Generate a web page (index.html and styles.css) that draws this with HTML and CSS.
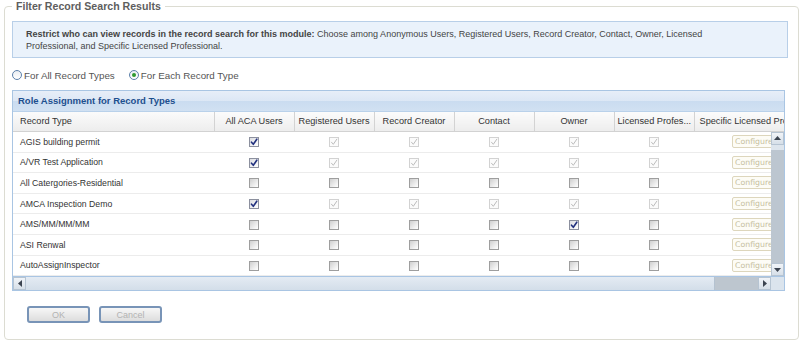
FILE: index.html
```html
<!DOCTYPE html>
<html lang="en">
<head>
	<title>Filter Record Search Results</title>
	<meta charset="utf-8" />
	<link rel="stylesheet" href="styles.css">
</head>
<body>
	<fieldset class="filter">
		<legend>Filter Record Search Results</legend>
		<div class="note">
			<b>Restrict who can view records in the record search for this module:</b> Choose among Anonymous Users, Registered Users, Record Creator, Contact, Owner, Licensed<br>
			Professional, and Specific Licensed Professional.
		</div>
		<div class="scope">
			<label class="opt"><span class="radio"></span>For All Record Types</label>
			<label class="opt"><span class="radio on"></span>For Each Record Type</label>
		</div>
		<div class="grid">
			<div class="grid-title">Role Assignment for Record Types</div>
			<div class="grid-head">
				<table>
					<colgroup><col class="c-name"><col><col><col><col><col><col><col class="c-spec"></colgroup>
					<tr>
						<th class="name">Record Type</th>
						<th>All ACA Users</th>
						<th>Registered Users</th>
						<th>Record Creator</th>
						<th>Contact</th>
						<th>Owner</th>
						<th>Licensed Profes...</th>
						<th class="spec">Specific Licensed Professional</th>
					</tr>
				</table>
			</div>
			<div class="grid-body">
				<div class="grid-view">
					<table id="rows">
						<colgroup><col class="c-name"><col><col><col><col><col><col><col class="c-spec"></colgroup>
					</table>
				</div>
				<div class="vbar">
					<span class="sbtn"><svg width="7" height="4" viewBox="0 0 7 4"><path d="M0 4 L3.5 0 L7 4 Z" fill="#3c4450"/></svg></span>
					<span class="vthumb"></span>
					<span class="vtrack"></span>
					<span class="sbtn"><svg width="7" height="4" viewBox="0 0 7 4"><path d="M0 0 L3.5 4 L7 0 Z" fill="#3c4450"/></svg></span>
				</div>
			</div>
			<div class="hbar">
				<span class="sbtn"><svg width="4" height="7" viewBox="0 0 4 7"><path d="M4 0 L0 3.5 L4 7 Z" fill="#3c4450"/></svg></span>
				<span class="hthumb"></span>
				<span class="htrack"></span>
				<span class="sbtn"><svg width="4" height="7" viewBox="0 0 4 7"><path d="M0 0 L4 3.5 L0 7 Z" fill="#3c4450"/></svg></span>
				<span class="corner"></span>
			</div>
		</div>
		<div class="actions">
			<button type="button" disabled>OK</button>
			<button type="button" disabled>Cancel</button>
		</div>
	</fieldset>

	<script>
		// on = checked and editable, dis = checked but locked, off = empty
		var records = [
			["AGIS building permit", ["on", "dis", "dis", "dis", "dis", "dis"]],
			["A/VR Test Application", ["on", "dis", "dis", "dis", "dis", "dis"]],
			["All Catergories-Residential", ["off", "off", "off", "off", "off", "off"]],
			["AMCA Inspection Demo", ["on", "dis", "dis", "dis", "dis", "dis"]],
			["AMS/MM/MM/MM", ["off", "off", "off", "off", "on", "off"]],
			["ASI Renwal", ["off", "off", "off", "off", "off", "off"]],
			["AutoAssignInspector", ["off", "off", "off", "off", "off", "off"]]
		];
		var tick = '<svg width="8" height="8" viewBox="0 0 8 8"><path d="M1.5 4.2 L3.3 6.3 L6.8 1.2"/></svg>';
		var html = "";
		for (var i = 0; i < records.length; i++) {
			html += '<tr><td class="name">' + records[i][0] + '</td>';
			var marks = records[i][1];
			for (var j = 0; j < marks.length; j++) {
				html += '<td><span class="cb ' + marks[j] + '">' + (marks[j] == "off" ? "" : tick) + '</span></td>';
			}
			html += '<td class="spec"><span class="cfg">Configure</span></td></tr>';
		}
		document.getElementById("rows").insertAdjacentHTML("beforeend", html);
	</script>
</body>
</html>
```

FILE: styles.css
```css
* {
	box-sizing: border-box
}

body {
	margin: 0;
	background: #fff;
	color: #333;
	font-family: "Liberation Sans", Arial, sans-serif;
}

/* outer group box */
.filter {
	margin: 0 4px 0 4px;
	padding: 9px 13px 16px 7px;
	border: 1px solid #dcdcd2;
	border-radius: 4px;
	min-width: 0;
}

.filter legend {
	padding: 0 4px;
	font-size: 10.6px;
	line-height: 12px;
	font-weight: bold;
	color: #5e5e5e;
}

.note {
	margin-right: -3px;
	padding: 6px 13px 5px;
	border: 1px solid #b8cfe8;
	background-color: #eaf2fb;
	font-size: 9px;
	line-height: 12px;
	color: #444;
}

.scope {
	display: flex;
	gap: 14px;
	height: 12px;
	margin-top: 11px;
	font-size: 9.8px;
	color: #555;
}

.opt {
	display: flex;
	align-items: center;
	gap: 2px;
}

.radio {
	display: flex;
	align-items: center;
	justify-content: center;
	width: 10px;
	height: 10px;
	border: 1px solid #5b80aa;
	border-radius: 50%;
	background: linear-gradient(#e9edf2, #fff);
}

.radio.on:after {
	content: "";
	width: 4px;
	height: 4px;
	border-radius: 50%;
	background-color: #2f9a2f;
}

/* record type grid */
.grid {
	margin-top: 9px;
	border: 1px solid #a9c5e3;
}

.grid-title {
	height: 21px;
	padding-left: 5px;
	line-height: 20px;
	font-size: 9.5px;
	font-weight: bold;
	color: #1d4f8e;
	background: linear-gradient(#e7eef8, #dce7f5 50%, #cadcf0 50%, #d1e1f2);
	border-bottom: 1px solid #b9d1ea;
}

.grid-head,
.grid-view {
	overflow: hidden;
}

.grid-body {
	display: flex;
}

.grid-view {
	flex: 1;
}

table {
	width: 841px;
	table-layout: fixed;
	border-collapse: collapse;
	border-spacing: 0;
}

col {
	width: 80px;
}

col.c-name {
	width: 201px;
}

col.c-spec {
	width: 160px;
}

th {
	height: 19px;
	padding: 0 3px;
	font-size: 9.2px;
	font-weight: normal;
	color: #333;
	white-space: nowrap;
	overflow: hidden;
	background: linear-gradient(#fbfbfb, #ededed);
	border-right: 1px solid #d3d3d3;
	border-bottom: 1px solid #d2d2d2;
}

th.name {
	text-align: left;
	padding-left: 7px;
}

th.spec {
	text-align: left;
	padding-left: 5px;
}

td {
	height: 20.6px;
	padding: 0;
	text-align: center;
	font-size: 8.7px;
	color: #333;
	border-bottom: 1px solid #ececec;
	white-space: nowrap;
}

td.name {
	text-align: left;
	padding-left: 7px;
}

td.spec {
	text-align: left;
	padding-left: 38px;
	overflow: hidden;
}

.cb {
	display: inline-flex;
	align-items: center;
	justify-content: center;
	width: 10px;
	height: 10px;
	vertical-align: middle;
	border: 1px solid #9e9e9e;
	background: linear-gradient(135deg, #cfcfcf, #f2f2f2 70%, #fff);
}

.cb svg {
	fill: none;
	stroke-linecap: round;
	stroke-linejoin: round;
}

.cb.on {
	border-color: #8c909e;
	background: linear-gradient(135deg, #dcdde2, #fff);
}

.cb.on svg {
	stroke: #22317f;
	stroke-width: 1.6;
}

.cb.dis {
	border-color: #d2d2d2;
	background: #fbfbfb;
}

.cb.dis svg {
	stroke: #bdbdbd;
	stroke-width: 1;
}

.cfg {
	display: inline-block;
	width: 52px;
	height: 13px;
	padding-left: 2px;
	vertical-align: middle;
	border: 1px solid #ddd6bc;
	border-radius: 2px;
	background-color: #fdfcf6;
	color: #c6bf9f;
	font-family: "DejaVu Sans", Verdana, sans-serif;
	font-size: 7.8px;
	line-height: 11px;
}

/* fake scrollbars */
.vbar {
	display: flex;
	flex-direction: column;
	width: 13px;
	background-color: #bcc6d0;
}

.hbar {
	display: flex;
	height: 14px;
	border-top: 1px solid #a9c5e3;
	background-color: #bdc6cf;
}

.sbtn {
	display: flex;
	align-items: center;
	justify-content: center;
	width: 13px;
	height: 13px;
	flex: none;
	border: 1px solid #b6c4d2;
	background: linear-gradient(#f1f4f8, #d6dfe8);
}

.vthumb {
	height: 5px;
	background-color: #dde5ed;
}

.vtrack {
	flex: 1;
}

.hthumb {
	flex: 1;
	background: linear-gradient(#e4ebf3, #d3dee9);
	border-right: 1px solid #b4c2d0;
}

.htrack {
	width: 43px;
}

.corner {
	width: 13px;
	background-color: #dbe4ed;
}

.actions {
	display: flex;
	gap: 9px;
	margin-top: 15px;
	padding-left: 15px;
}

.actions button {
	width: 63px;
	height: 17px;
	padding: 0;
	border: 2px solid #7894b7;
	border-radius: 3px;
	background: linear-gradient(#f7f7f7, #dddddd);
	color: #b3b3b3;
	font-family: "Liberation Sans", Arial, sans-serif;
	font-size: 9px;
}
```
